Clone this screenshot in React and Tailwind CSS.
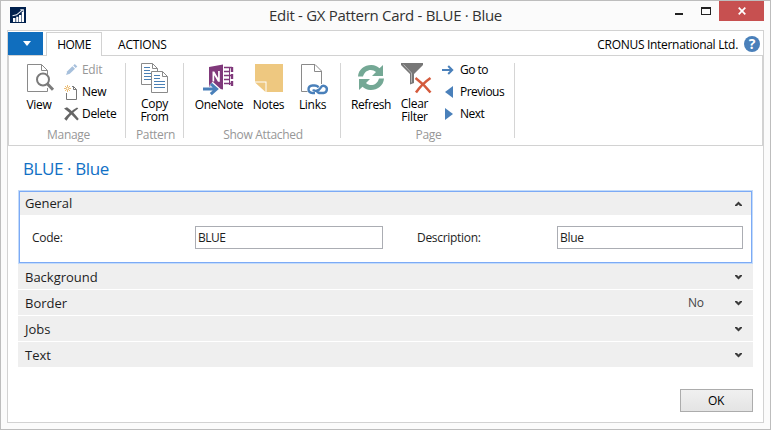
import React from "react";

const pageStroke = "#8a8a8a";

function LogoIcon() {
  return (
    <svg width="16" height="16" viewBox="0 0 16 16">
      <rect width="16" height="16" fill="#00204d" />
      <path d="M3 11h2.400v4H3zM6.200 9.800h2.200V15H6.200zM9 8h2.200v7H9zM11.800 5H14v10h-2.200z" fill="#fff" />
      <path d="M2.500 8.800 6.600 7.800 12.600 2.800M10.300 2.700h3v2.600" fill="none" stroke="#e8edf3" strokeWidth="1.100" />
    </svg>
  );
}

function ViewIcon() {
  return (
    <svg width="28" height="28" viewBox="0 0 28 28">
      <path d="M20.500 24v3.500H.5V.5h14l6 6v4M14.500.5v6h6" fill="none" stroke={pageStroke} />
      <circle cx="16" cy="15.500" r="6" fill="#fff" stroke="#7b7b7b" strokeWidth="2" />
      <path d="m20.300 19.700 5.700 6" stroke="#7b7b7b" strokeWidth="3" />
    </svg>
  );
}

function CopyIcon() {
  return (
    <svg width="28" height="31" viewBox="0 0 28 31">
      <path d="M.5.5h11l5 5v16H.5z" fill="#fff" stroke={pageStroke} />
      <path d="M11.500.5v5h5" fill="none" stroke={pageStroke} />
      <path d="M3 4.500h6M3 7.500h6M3 10.500h11M3 13.500h9M3 16.500h9" stroke="#4a80b5" />
      <path d="M10.500 8.500h11l5 5v16h-16z" fill="#fff" stroke={pageStroke} />
      <path d="M21.500 8.500v5h5" fill="none" stroke={pageStroke} />
      <path d="M13 12.500h6M13 15.500h6M13 18.500h11M13 21.500h11M13 24.500h11" stroke="#4a80b5" />
    </svg>
  );
}

function OneNoteIcon() {
  return (
    <svg width="32" height="32" viewBox="0 0 32 32">
      <path d="M21 3.500h8M21 7.500h5M21 11.500h8M21 15.500h5M21 19.500h8" stroke="#80397b" strokeWidth="1.600" />
      <path d="M26.500 3v18" stroke="#80397b" />
      <path d="M29 3v5M29 10v5M29 17v5" stroke="#80397b" strokeWidth="2.400" />
      <path d="M6 3 20 .5v25L6 23z" fill="#80397b" />
      <path d="M9.500 17.500V7.500h1.800l3.800 6.500V7h1.700v10.800H15l-3.800-6.600v6.300z" fill="#fff" />
      <path d="M0 25h13M8 19.500l6 5.500-6 5.500" fill="none" stroke="#fff" strokeWidth="5" />
      <path d="M0 25h13M7.800 19.800l5.800 5.200-5.800 5.200" fill="none" stroke="#4a80ba" strokeWidth="3" />
    </svg>
  );
}

function NotesIcon() {
  return (
    <svg width="28" height="28" viewBox="0 0 28 28">
      <path d="M0 0h28v28H11.500V17.500H0z" fill="#eec880" />
      <path d="M0 18.500h10.500V28z" fill="#eec880" />
    </svg>
  );
}

function LinksIcon() {
  return (
    <svg width="28" height="32" viewBox="0 0 28 32">
      <path d="M6.500 27.500H.5V.5h13.500l6.500 6.500v13M13.500.5v7h7" fill="none" stroke={pageStroke} />
      <g fill="none" stroke="#4a80ba" strokeWidth="2.400">
        <path d="M17.500 23.500c-.8-1.600-2.300-2-4-2h-2c-5.300.4-5.300 7.300 0 7.500h2.500" />
        <path d="M12 25.500c1.500 2.500 6 1.300 7.500-1.500 1.200-2.300 2.800-2.500 4.300-1.800 3.300 1.500 2.500 6.300-1.300 6.800h-3c-1.700 0-3-.5-3.500-2" />
      </g>
    </svg>
  );
}

function RefreshIcon() {
  return (
    <svg width="28" height="28" viewBox="0 0 28 28">
      <g fill="#74a895">
        <path d="M1 12.500C1.500 5 8 .8 14.500 1c3.400.1 6 1.300 8 3.200L26 1v11H15l4-4c-3.800-3.600-11-2.800-13 4.500z" />
        <path d="M27 14.500C26.500 22 20 26.200 13.500 26c-3.400-.1-6-1.300-8-3.200L2 26V15h11l-4 4c3.800 3.600 11 2.800 13-4.500z" />
      </g>
    </svg>
  );
}

function ClearFilterIcon() {
  return (
    <svg width="32" height="32" viewBox="0 0 32 32">
      <path d="M0 0h22v2l-9 9v9l-4 1.500V11L0 2z" fill="#777" />
      <path d="M2.500 1.500 10.500 10v9.500" fill="none" stroke="#c4c4c4" strokeWidth=".8" />
      <path d="m15.500 14 14 15M30 13 15 29.500" fill="none" stroke="#fff" strokeWidth="4" />
      <path d="M14.500 15c4 3 10 8 15 14.500M29.500 15c-5 3.500-10 8-14.500 14.500" fill="none" stroke="#d45b3d" strokeWidth="2.500" />
    </svg>
  );
}

function EditIcon() {
  return (
    <svg width="14" height="14" viewBox="0 0 14 14">
      <path d="M3.300 8.200 8.400 3.200l2.600 2.500-5.200 5.100-3.700 1.100z" fill="#a7c0dc" />
      <path d="m9.200 2.500 1.600-1.500 2.500 2.400-1.600 1.600z" fill="#a7c0dc" />
    </svg>
  );
}

function NewIcon() {
  return (
    <svg width="14" height="15" viewBox="0 0 14 15">
      <path d="M2.500 8v6.500h10V4.500l-3-3H8M9.500 1.500v3h3" fill="none" stroke="#777" />
      <path d="M3.500 0v7M0 3.500h7M1 1l5 5M6 1 1 6" stroke="#e9b566" strokeWidth=".9" />
      <circle cx="3.500" cy="3.500" r="1" fill="#fff" />
    </svg>
  );
}

function DeleteIcon() {
  return (
    <svg width="15" height="14" viewBox="0 0 15 14">
      <path d="M0 1.500 3 .3c4 2.700 8 6.700 11.800 11.700l-1.600 1.500C9 9 5 4.800 0 1.500z" fill="#666" />
      <path d="M14.300 1.500 13 .4C8 3.200 3.200 7.500.2 11.800l2.300 1.900C5.500 9 9.300 5 14.300 1.500z" fill="#666" />
    </svg>
  );
}

function GoIcon() {
  return (
    <svg width="12" height="10" viewBox="0 0 12 10">
      <path d="M0 5h10M6.200 1l4 4-4 4" fill="none" stroke="#4a80ba" strokeWidth="2" />
    </svg>
  );
}

function Chevron({ up }) {
  return (
    <svg width="8" height="6" viewBox="0 0 8 6">
      <path d={up ? "M0 4 3.500.5 7 4v1H5L3.500 3.500 2 5H0z" : "M0 1h2l1.500 1.500L5 1h2v1L3.500 5.500 0 2z"} fill="#3c3c3c" />
    </svg>
  );
}

function Group({ label, className, labelClass, children }) {
  return (
    <div className={`flex h-[75px] flex-col border-r border-[#d5d5d5] ${className}`}>
      <div className="flex h-[64px] shrink-0">{children}</div>
      <div className={`h-[16px] shrink-0 text-center leading-[16px] text-[#979797] ${labelClass}`}>{label}</div>
    </div>
  );
}

function BigButton({ icon, className, children }) {
  return (
    <div className={`flex flex-col items-center ${className}`}>
      <div className="flex h-[34px] shrink-0 items-start">{icon}</div>
      <div className="text-center leading-[13px]">{children}</div>
    </div>
  );
}

function SmallButton({ icon, className = "", children }) {
  return (
    <div className={`flex h-[22px] items-center ${className}`}>
      <span className="flex w-[18px] shrink-0 items-center">{icon}</span>
      {children}
    </div>
  );
}

function Section({ title, value }) {
  return (
    <div className="mb-px flex h-[25px] items-center bg-[#efefef] pr-[10px] pl-[7px]">
      <span className="pt-[2px] text-[13px] tracking-[0px]">{title}</span>
      <span className="ml-auto w-[47px] pt-px text-[12px] text-[#444]">{value}</span>
      <Chevron />
    </div>
  );
}

export default function App() {
  return (
    <div className="flex h-[430px] w-[771px] flex-col overflow-hidden border border-[#bdbdbd] bg-[#fbfbfb] font-['Open_Sans','Noto_Sans',sans-serif] text-[12px] tracking-[-0.3px] whitespace-nowrap text-[#1e1e1e]">
      <header className="flex h-[29px] shrink-0 items-start">
        <div className="mt-[6px] ml-[9px] w-[244px]"><LogoIcon /></div>
        <div className="mt-[4px] ml-[15px] text-[15px] leading-[21px] tracking-[-0.3px] text-[#333]">Edit - GX Pattern Card - BLUE · Blue</div>
        <div className="ml-auto flex items-start">
          <span className="mt-[12px] h-[2px] w-[8px] bg-[#222]" />
          <span className="mt-[6px] ml-[18px] h-[8px] w-[10px] border border-t-2 border-[#222]" />
          <span className="ml-[8px] flex h-[20px] w-[45px] items-center justify-center bg-[#c75050]">
            <svg width="8" height="8" viewBox="0 0 8 8"><path d="m.7.700 6.600 6.600M7.300.700.7 7.300" stroke="#fff" strokeWidth="1.700" /></svg>
          </span>
          <span className="w-[6px]" />
        </div>
      </header>

      <main className="mx-[6px] flex h-[393px] shrink-0 flex-col border border-[#d2d2d2] bg-white">
        <nav className="flex h-[24px] shrink-0 items-end">
          <div className="flex h-[23px] w-[35px] items-center justify-center bg-[#106ebe]">
            <svg className="ml-[3px]" width="8" height="5" viewBox="0 0 8 5"><path d="M0 0h8L4 5z" fill="#fff" /></svg>
          </div>
          <div className="z-10 -mb-px ml-[3px] flex h-[24px] w-[56px] items-center justify-center border border-b-0 border-[#d2d2d2] bg-white pt-px text-black tracking-[-0.5px]">HOME</div>
          <div className="ml-[16px] flex h-[23px] items-center pt-[3px] text-black tracking-[-0.2px]">ACTIONS</div>
          <div className="mr-[6px] ml-auto flex h-[23px] items-center pt-[3px] text-black">CRONUS International Ltd.</div>
          <span className="mr-[3px] mb-[3px] flex h-[16px] w-[16px] items-center justify-center rounded-full bg-[#4a80ba] text-[14px] leading-none font-bold text-white">?</span>
        </nav>

        <div className="flex h-[91px] shrink-0 border border-[#d2d2d2] pt-[7px] text-black">
          <Group label="Manage" className="w-[117px]" labelClass="pl-[3px]">
            <BigButton icon={<ViewIcon />} className="ml-[16px] w-[30px] pt-px pl-[1px]"><span className="-ml-[3px]">View</span></BigButton>
            <div className="-mt-[4px] ml-[9px] flex flex-col">
              <SmallButton icon={<EditIcon />} className="text-[#979797]">Edit</SmallButton>
              <SmallButton icon={<NewIcon />}>New</SmallButton>
              <SmallButton icon={<DeleteIcon />}>Delete</SmallButton>
            </div>
          </Group>
          <Group label="Pattern" className="w-[58px]" labelClass="pl-[2px] tracking-[-0.35px]">
            <BigButton icon={<CopyIcon />} className="w-full">Copy<br />From</BigButton>
          </Group>
          <Group label="Show Attached" className="w-[157px]" labelClass="pl-[2px]">
            <BigButton icon={<OneNoteIcon />} className="ml-[11px] w-[48px] pt-px">OneNote</BigButton>
            <BigButton icon={<NotesIcon />} className="ml-[10px] w-[31px] pt-px">Notes</BigButton>
            <BigButton icon={<div className="pl-[4px]"><LinksIcon /></div>} className="ml-[13px] w-[32px] pt-px"><span className="-ml-px">Links</span></BigButton>
          </Group>
          <Group label="Page" className="w-[174px]" labelClass="pl-[2px]">
            <BigButton icon={<RefreshIcon />} className="ml-[10px] w-[40px] pt-px tracking-[-0.45px]">Refresh</BigButton>
            <BigButton icon={<ClearFilterIcon />} className="ml-[10px] w-[32px]"><div className="-ml-[5px]">Clear<br />Filter</div></BigButton>
            <div className="-mt-[4px] ml-[9px] flex flex-col tracking-[-0.5px]">
              <SmallButton icon={<GoIcon />}>Go to</SmallButton>
              <SmallButton icon={<svg className="ml-[3px]" width="8" height="12" viewBox="0 0 8 12"><path d="M8 0v12L0 6z" fill="#4a80ba" /></svg>}>Previous</SmallButton>
              <SmallButton icon={<svg className="ml-[3px]" width="8" height="12" viewBox="0 0 8 12"><path d="M0 0v12l8-6z" fill="#4a80ba" /></svg>}>Next</SmallButton>
            </div>
          </Group>
        </div>

        <h1 className="mt-[10px] ml-[15px] h-[34px] text-[17px] leading-[25px] tracking-[-0.4px] text-[#1070c5]">BLUE · Blue</h1>

        <div className="mx-[10px] flex flex-col">
          <section className="h-[74px] border border-[#c3dbfa]">
            <div className="h-[72px] border border-[#7caaf5]">
              <div className="flex h-[23px] items-center justify-between bg-[#efefef] pr-[8px] pl-[5px]">
                <span className="text-[13px] tracking-[-0.1px]">General</span>
                <Chevron up />
              </div>
              <div className="flex h-[45px] items-center pl-[12px]">
                <label className="w-[163px]">Code:</label>
                <div className="flex h-[23px] w-[188px] items-center border border-[#abadb3] pl-[2px] tracking-[-0.5px]">BLUE</div>
                <label className="ml-[34px] w-[140px]">Description:</label>
                <div className="flex h-[23px] w-[186px] items-center border border-[#abadb3] pl-[2px]">Blue</div>
              </div>
            </div>
          </section>
          <Section title="Background" />
          <Section title="Border" value="No" />
          <Section title="Jobs" />
          <Section title="Text" />
        </div>

        <div className="mt-[21px] mr-[10px] ml-auto flex h-[23px] w-[73px] items-center justify-center border border-[#acacac] bg-linear-to-b from-[#f0f0f0] to-[#e4e4e4] pr-px text-black">OK</div>
      </main>
    </div>
  );
}
